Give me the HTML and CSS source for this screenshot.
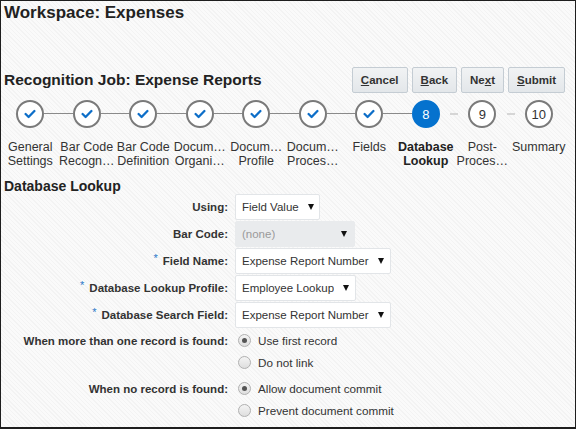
FILE: index.html
```html
<!DOCTYPE html>
<html lang="en">
<head>
    <meta charset="UTF-8">
    <meta name="viewport" content="width=device-width, initial-scale=1.0">
    <title>Workspace: Expenses</title>
    <link rel="stylesheet" href="styles.css">
</head>
<body>

    <div class="page">
        <h1 class="ws-title">Workspace: Expenses</h1>

        <div class="job-bar">
            <h2 class="job-title">Recognition Job: Expense Reports</h2>
            <div class="actions">
                <button class="btn"><u>C</u>ancel</button>
                <button class="btn"><u>B</u>ack</button>
                <button class="btn">Ne<u>x</u>t</button>
                <button class="btn"><u>S</u>ubmit</button>
            </div>
        </div>

        <div class="steps">
            <div class="step done">
                <div class="step-dot"><svg width="12" height="10" viewBox="0 0 12 10"><polyline points="1.6,5 4.6,8 10.4,2"/></svg></div>
                <div class="step-label">General<br>Settings</div>
            </div>
            <div class="step done">
                <div class="step-dot"><svg width="12" height="10" viewBox="0 0 12 10"><polyline points="1.6,5 4.6,8 10.4,2"/></svg></div>
                <div class="step-label">Bar Code<br>Recogn…</div>
            </div>
            <div class="step done">
                <div class="step-dot"><svg width="12" height="10" viewBox="0 0 12 10"><polyline points="1.6,5 4.6,8 10.4,2"/></svg></div>
                <div class="step-label">Bar Code<br>Definition</div>
            </div>
            <div class="step done">
                <div class="step-dot"><svg width="12" height="10" viewBox="0 0 12 10"><polyline points="1.6,5 4.6,8 10.4,2"/></svg></div>
                <div class="step-label">Docum…<br>Organi…</div>
            </div>
            <div class="step done">
                <div class="step-dot"><svg width="12" height="10" viewBox="0 0 12 10"><polyline points="1.6,5 4.6,8 10.4,2"/></svg></div>
                <div class="step-label">Docum…<br>Profile</div>
            </div>
            <div class="step done">
                <div class="step-dot"><svg width="12" height="10" viewBox="0 0 12 10"><polyline points="1.6,5 4.6,8 10.4,2"/></svg></div>
                <div class="step-label">Docum…<br>Proces…</div>
            </div>
            <div class="step done">
                <div class="step-dot"><svg width="12" height="10" viewBox="0 0 12 10"><polyline points="1.6,5 4.6,8 10.4,2"/></svg></div>
                <div class="step-label">Fields</div>
            </div>
            <div class="step current">
                <div class="step-dot">8</div>
                <div class="step-label">Database<br>Lookup</div>
            </div>
            <div class="step todo">
                <div class="step-dot">9</div>
                <div class="step-label">Post-<br>Proces…</div>
            </div>
            <div class="step todo">
                <div class="step-dot">10</div>
                <div class="step-label">Summary</div>
            </div>
        </div>

        <h3 class="lookup-title">Database Lookup</h3>

        <div class="form">
            <div class="field-row">
                <label class="field-label">Using:</label>
                <div class="select w-85"><span class="select-text">Field Value</span><span class="arrow"></span></div>
            </div>
            <div class="field-row">
                <label class="field-label">Bar Code:</label>
                <div class="select disabled w-120"><span class="select-text">(none)</span><span class="arrow"></span></div>
            </div>
            <div class="field-row">
                <label class="field-label"><span class="req">*</span>Field Name:</label>
                <div class="select w-156"><span class="select-text">Expense Report Number</span><span class="arrow"></span></div>
            </div>
            <div class="field-row">
                <label class="field-label"><span class="req">*</span>Database Lookup Profile:</label>
                <div class="select w-121"><span class="select-text">Employee Lookup</span><span class="arrow"></span></div>
            </div>
            <div class="field-row">
                <label class="field-label"><span class="req">*</span>Database Search Field:</label>
                <div class="select w-156"><span class="select-text">Expense Report Number</span><span class="arrow"></span></div>
            </div>

            <div class="radio-group first">
                <div class="radio-row">
                    <label class="field-label">When more than one record is found:</label>
                    <span class="radio checked"></span><span class="radio-text">Use first record</span>
                </div>
                <div class="radio-row">
                    <span class="field-label"></span>
                    <span class="radio"></span><span class="radio-text">Do not link</span>
                </div>
            </div>
            <div class="radio-group">
                <div class="radio-row">
                    <label class="field-label">When no record is found:</label>
                    <span class="radio checked"></span><span class="radio-text">Allow document commit</span>
                </div>
                <div class="radio-row">
                    <span class="field-label"></span>
                    <span class="radio"></span><span class="radio-text">Prevent document commit</span>
                </div>
            </div>
        </div>
    </div>

</body>
</html>
```

FILE: styles.css
```css
body {
    margin: 0;
    font-family: "Liberation Sans", Arial, sans-serif;
    color: #333;
}
.page {
    width: 576px;
    height: 429px;
    box-sizing: border-box;
    border: 1px solid #1e1e1e;
    border-bottom-width: 2px;
    overflow: hidden;
    background: repeating-linear-gradient(45deg, #f3f3f3 0, #f3f3f3 1px, #fafafa 1px, #fafafa 3px);
}
.ws-title {
    margin: 2px 0 0 3px;
    font-size: 17px;
    line-height: 20px;
    font-weight: bold;
    color: #222;
}
.job-bar {
    display: flex;
    align-items: center;
    justify-content: space-between;
    height: 26px;
    margin-top: 44px;
    padding: 0 10px 0 3px;
}
.job-title {
    margin: 0;
    font-size: 15.5px;
    line-height: 20px;
    font-weight: bold;
    color: #222;
}
.actions {
    display: flex;
    gap: 4px;
}
.btn {
    height: 26px;
    padding: 0 8px;
    border: 1px solid #c4ccd3;
    border-radius: 2px;
    background: linear-gradient(to bottom, #f1f3f4, #e3e7ea);
    font-family: inherit;
    font-size: 11.5px;
    font-weight: bold;
    color: #333;
    cursor: pointer;
}

/* train */
.steps {
    display: grid;
    grid-template-columns: repeat(10, 56.5px);
    margin-top: 7px;
    padding-left: 1px;
}
.step {
    position: relative;
    display: flex;
    flex-direction: column;
    align-items: center;
}
.step::before {
    content: "";
    position: absolute;
    top: 13px;
    left: -14.25px;
    width: 28.5px;
    height: 1px;
    background: #8a8a8a;
}
.step:first-child::before {
    display: none;
}
.step.todo::before {
    left: -4px;
    width: 8px;
    height: 2px;
    background: #d6d6d6;
}
.step-dot {
    width: 28px;
    height: 28px;
    box-sizing: border-box;
    border: 2px solid #7a7a7a;
    border-radius: 50%;
    background: #fff;
    display: flex;
    align-items: center;
    justify-content: center;
    font-size: 13px;
    color: #333;
}
.step-dot polyline {
    fill: none;
    stroke: #0d6ec8;
    stroke-width: 2.3;
    stroke-linecap: round;
    stroke-linejoin: round;
}
.step.current .step-dot {
    background: #0572ce;
    border-color: #0572ce;
    color: #fff;
}
.step-label {
    margin-top: 11.5px;
    font-size: 12.5px;
    line-height: 14px;
    text-align: center;
    white-space: nowrap;
    color: #333;
}
.step.current .step-label {
    font-weight: bold;
    color: #222;
}

/* form */
.lookup-title {
    margin: 11px 0 0 3px;
    font-size: 14px;
    line-height: 15px;
    font-weight: bold;
    color: #222;
}
.field-row {
    display: flex;
    align-items: center;
    height: 26px;
    margin-bottom: 1px;
}
.field-label {
    flex: none;
    width: 227px;
    margin-right: 7px;
    text-align: right;
    font-size: 11.5px;
    font-weight: bold;
    color: #333;
    white-space: nowrap;
}
.req {
    position: relative;
    top: -3px;
    margin-right: 5px;
    font-size: 11px;
    font-weight: normal;
    color: #2a78c9;
}
.select {
    display: flex;
    align-items: center;
    height: 26px;
    box-sizing: border-box;
    padding: 0 5px 0 6px;
    border: 1px solid #e2e5e8;
    border-radius: 2px;
    background: #fff;
    font-size: 11.5px;
    color: #333;
    overflow: hidden;
}
.select-text {
    overflow: hidden;
    white-space: nowrap;
}
.arrow {
    flex: none;
    width: 0;
    height: 0;
    margin-left: 9px;
    border-left: 3px solid transparent;
    border-right: 3px solid transparent;
    border-top: 6px solid #111;
}
.select.disabled {
    background: #e9ebed;
    border-color: #e9ebed;
    color: #9a9a9a;
}
.select.disabled .arrow {
    margin-left: auto;
    margin-right: 2px;
}
.w-85 { width: 85px; }
.w-120 { width: 120px; }
.w-121 { width: 121px; }
.w-156 { width: 156px; }

.radio-group.first {
    margin-top: 2px;
}
.radio-group + .radio-group {
    margin-top: 4px;
}
.radio-row {
    display: flex;
    align-items: center;
    height: 22px;
}
.radio {
    flex: none;
    position: relative;
    width: 13px;
    height: 13px;
    box-sizing: border-box;
    margin-left: 3px;
    border: 1px solid #b0b0b0;
    border-radius: 50%;
    background: linear-gradient(to bottom, #f4f4f4, #dedede);
}
.radio.checked::after {
    content: "";
    position: absolute;
    top: 3px;
    left: 3px;
    width: 5px;
    height: 5px;
    border-radius: 50%;
    background: #555;
}
.radio-text {
    margin-left: 7px;
    font-size: 11.7px;
    color: #333;
    white-space: nowrap;
}
```
